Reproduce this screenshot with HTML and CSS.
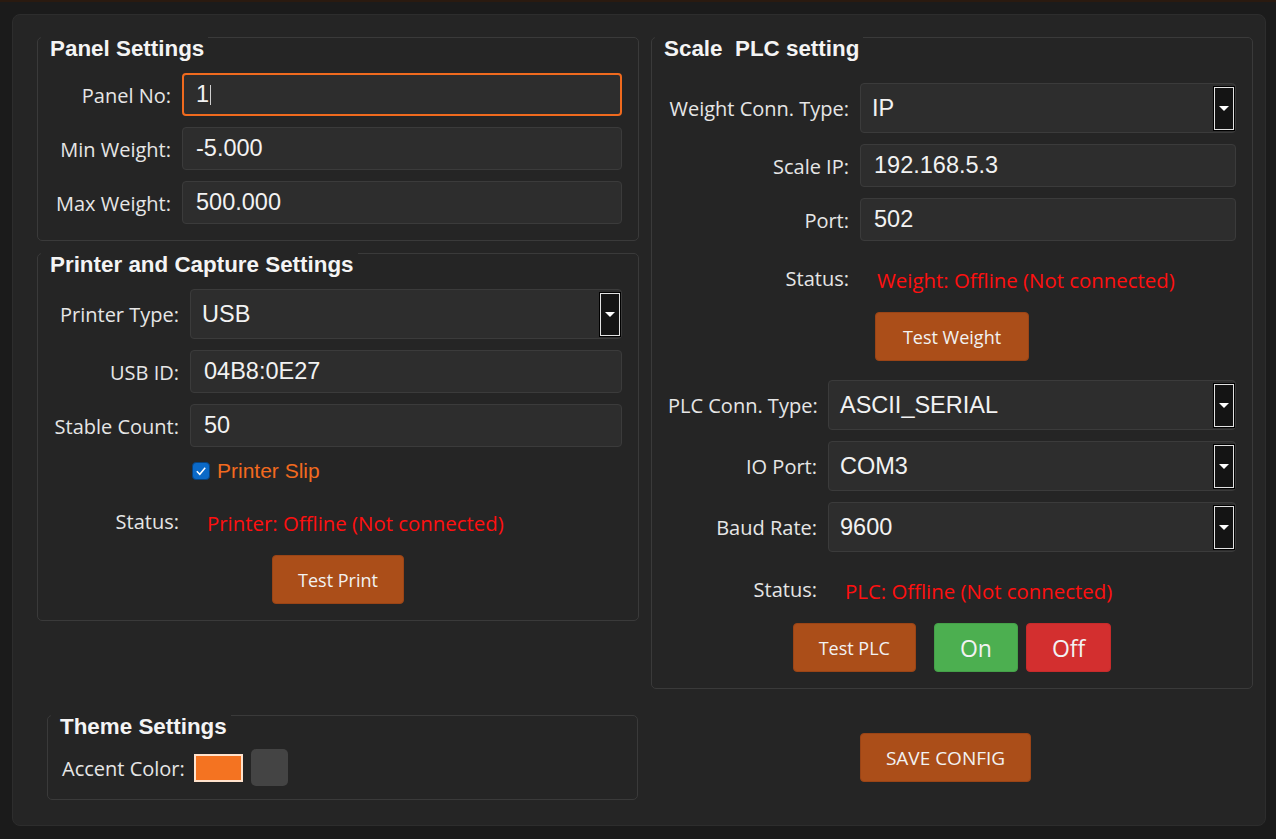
FILE: index.html
```html
<!DOCTYPE html>
<html lang="en">
<head>
<meta charset="utf-8">
<title>Settings</title>
<link rel="stylesheet" href="styles.css">
</head>
<body>
<div class="app">
  <div class="col-left">
    <section class="group">
      <h2 class="legend">Panel Settings</h2>
      <div class="form" style="--lw:117px">
        <label class="lbl">Panel No:</label>
        <div class="field focus">1<span class="caret"></span></div>
        <label class="lbl">Min Weight:</label>
        <div class="field">-5.000</div>
        <label class="lbl">Max Weight:</label>
        <div class="field">500.000</div>
      </div>
    </section>

    <section class="group">
      <h2 class="legend">Printer and Capture Settings</h2>
      <div class="form" style="--lw:125px">
        <label class="lbl">Printer Type:</label>
        <div class="field select">USB<span class="drop"></span></div>
        <label class="lbl">USB ID:</label>
        <div class="field">04B8:0E27</div>
        <label class="lbl">Stable Count:</label>
        <div class="field">50</div>
        <div class="check-row">
          <span class="checkbox"><svg width="18" height="18" viewBox="0 0 18 18"><polyline points="4.8,9.2 7.8,12.3 13.2,5.8" fill="none" stroke="#fff" stroke-width="1.5"/></svg></span>
          <span class="check-label">Printer Slip</span>
        </div>
        <label class="lbl status-lbl">Status:</label>
        <div class="status-val">Printer: Offline (Not connected)</div>
        <div class="btn-row">
          <button class="btn">Test Print</button>
        </div>
      </div>
    </section>
  </div>

  <section class="group col-right">
    <h2 class="legend">Scale&nbsp; PLC setting</h2>
    <div class="form first-wide" style="--lw:181px">
      <label class="lbl">Weight Conn. Type:</label>
      <div class="field select">IP<span class="drop"></span></div>
      <label class="lbl">Scale IP:</label>
      <div class="field">192.168.5.3</div>
      <label class="lbl">Port:</label>
      <div class="field">502</div>
      <label class="lbl status-lbl">Status:</label>
      <div class="status-val">Weight: Offline (Not connected)</div>
      <div class="btn-row">
        <button class="btn btn-wide">Test Weight</button>
      </div>
    </div>
    <div class="form after-btn" style="--lw:149px">
      <label class="lbl">PLC Conn. Type:</label>
      <div class="field select">ASCII_SERIAL<span class="drop"></span></div>
      <label class="lbl">IO Port:</label>
      <div class="field select">COM3<span class="drop"></span></div>
      <label class="lbl">Baud Rate:</label>
      <div class="field select">9600<span class="drop"></span></div>
      <label class="lbl status-lbl">Status:</label>
      <div class="status-val">PLC: Offline (Not connected)</div>
      <div class="btn-row">
        <button class="btn">Test PLC</button>
        <button class="btn btn-big btn-on">On</button>
        <button class="btn btn-big btn-off">Off</button>
      </div>
    </div>
  </section>

  <section class="group theme">
    <h2 class="legend">Theme Settings</h2>
    <div class="theme-row">
      <span class="lbl">Accent Color:</span>
      <span class="swatch-orange"></span>
      <span class="swatch-grey"></span>
    </div>
  </section>

  <div class="save-wrap">
    <button class="btn btn-save">SAVE CONFIG</button>
  </div>
</div>
</body>
</html>
```

FILE: styles.css
```css
html, body {
  margin: 0;
  height: 100%;
}

body {
  box-sizing: border-box;
  background: #1b1b1b;
  border-top: 2px solid #2a1a10;
  padding: 12px 10px 13px 12px;
  font-family: "Open Sans", "Noto Sans", sans-serif;
  color: #e8e8e8;
}

.app {
  box-sizing: border-box;
  height: 100%;
  background: #252525;
  border: 1px solid #2d2d2d;
  border-radius: 8px;
  padding: 22px 12px 11px 24px;
  display: grid;
  grid-template-columns: 602px 602px;
  grid-template-rows: auto 1fr;
  column-gap: 12px;
  row-gap: 12px;
}

.col-left {
  display: flex;
  flex-direction: column;
  gap: 12px;
  align-self: start;
}

.group {
  border: 1px solid #3a3a3a;
  border-radius: 5px;
  padding: 0 16px 16px 16px;
}

.col-right {
  align-self: start;
}

.legend {
  display: block;
  width: fit-content;
  margin: -1px 0 0 -13px;
  padding: 0 4px 0 9px;
  background: #252525;
  font: bold 22.4px/24px "Liberation Sans", Arial, sans-serif;
  color: #f4f4f4;
}

.form {
  display: grid;
  grid-template-columns: var(--lw) 1fr;
  column-gap: 11px;
  row-gap: 11px;
  align-items: center;
  margin-top: 12px;
}

.form.first-wide {
  margin-top: 22px;
}

.form.after-btn {
  margin-top: 19px;
}

.lbl {
  text-align: right;
  font-size: 20px;
  line-height: 26px;
  padding-top: 2px;
  color: #e6e6e6;
  white-space: nowrap;
}

.field {
  box-sizing: border-box;
  height: 43px;
  background: #2d2d2d;
  border: 1px solid #3b3b3b;
  border-radius: 4px;
  display: flex;
  align-items: center;
  padding: 0 13px;
  font: 23.5px "Liberation Sans", Arial, sans-serif;
  color: #f2f2f2;
}

.field.select {
  position: relative;
  height: 50px;
  padding-left: 11px;
}

.field.focus {
  border: 2px solid #f06a1e;
  padding-left: 12px;
}

.caret {
  display: inline-block;
  width: 1px;
  height: 20px;
  background: #cfcfcf;
  margin-left: 1px;
}

.drop {
  position: absolute;
  right: 1px;
  top: 3px;
  bottom: 2px;
  width: 18px;
  background: #141414;
  border: 1px solid #e2e2e2;
  box-shadow: 0 0 0 1px #000;
  display: flex;
  align-items: center;
  justify-content: center;
}

.drop::after {
  content: "";
  border-left: 5px solid transparent;
  border-right: 5px solid transparent;
  border-top: 5px solid #ffffff;
}

.check-row {
  grid-column: 2;
  height: 26px;
  display: flex;
  align-items: center;
  gap: 7px;
  padding-left: 2px;
}

.checkbox {
  width: 18px;
  height: 18px;
  box-sizing: border-box;
  border-radius: 4px;
  background: #0b69c7;
  border: 1px solid #07427e;
  display: flex;
  align-items: center;
  justify-content: center;
}

.checkbox svg {
  display: block;
  margin: -1px;
}

.check-label {
  font: 21px "Liberation Sans", Arial, sans-serif;
  color: #f26a1f;
}

.status-lbl {
  margin-top: 10px;
}

.status-val {
  margin-top: 12px;
  font-size: 20.4px;
  line-height: 26px;
  padding-left: 17px;
  padding-top: 3px;
  color: #ff1010;
  white-space: nowrap;
}

.btn-row {
  grid-column: 1 / -1;
  display: flex;
  justify-content: center;
  gap: 8px;
  margin-top: 8px;
}

.btn {
  box-sizing: border-box;
  height: 49px;
  padding: 0 25px;
  border: 1px solid #9a4416;
  border-radius: 4px;
  background: #ab4e19;
  color: #f2f2f2;
  font-family: "Open Sans", "Noto Sans", sans-serif;
  font-size: 18px;
}

.btn-wide {
  padding: 0 27px;
}

.btn-big {
  font-size: 23px;
}

.btn-on {
  background: #4caf50;
  border-color: #45a049;
  margin-left: 10px;
}

.btn-off {
  background: #d32f2f;
  border-color: #c62b2b;
}

.theme {
  align-self: center;
  margin: 0 1px 0 10px;
  padding: 0 14px 13px 14px;
}

.theme .legend {
  margin-left: -11px;
}

.theme-row {
  display: flex;
  align-items: center;
  margin-top: 10px;
  height: 37px;
}

.theme-row .lbl {
  margin-right: 9px;
}

.swatch-orange {
  box-sizing: border-box;
  width: 49px;
  height: 28px;
  margin-top: 1px;
  background: #f47321;
  border: 2px solid #ffe2cc;
  margin-right: 8px;
}

.swatch-grey {
  width: 37px;
  height: 37px;
  border-radius: 5px;
  background: #444444;
}

.save-wrap {
  align-self: center;
  display: flex;
  justify-content: center;
  padding-right: 13px;
}

.btn-save {
  font-size: 19px;
}
```
